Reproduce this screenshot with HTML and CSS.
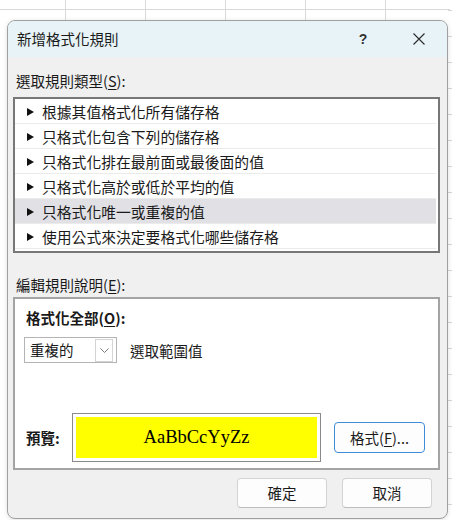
FILE: index.html
```
<!DOCTYPE html>
<html lang="zh-Hant">
<head>
<meta charset="utf-8">
<title>新增格式化規則</title>
<link rel="stylesheet" href="styles.css">
</head>
<body>
<div class="sheet"></div>
<div class="dialog">
  <div class="titlebar">
    <span class="title">新增格式化規則</span>
    <span class="help">?</span>
    <span class="close"><svg width="12" height="12" viewBox="0 0 12 12"><path d="M0.5 0.5 L11.5 11.5 M11.5 0.5 L0.5 11.5" stroke="#2b2b2b" stroke-width="1.1" fill="none"/></svg></span>
  </div>
  <div class="body">
    <div class="label">選取規則類型(<u>S</u>):</div>
    <ul class="rules">
      <li><span class="tri"></span>根據其值格式化所有儲存格</li>
      <li><span class="tri"></span>只格式化包含下列的儲存格</li>
      <li><span class="tri"></span>只格式化排在最前面或最後面的值</li>
      <li><span class="tri"></span>只格式化高於或低於平均的值</li>
      <li class="selected"><span class="tri"></span>只格式化唯一或重複的值</li>
      <li><span class="tri"></span>使用公式來決定要格式化哪些儲存格</li>
    </ul>
    <div class="label label-edit">編輯規則說明(<u>E</u>):</div>
    <div class="edit">
      <div class="strong">格式化全部(<u>O</u>):</div>
      <div class="select-row">
        <div class="select"><span class="select-text">重複的</span><span class="select-btn"><svg width="9" height="5" viewBox="0 0 9 5"><path d="M0.5 0.5 L4.5 4.5 L8.5 0.5" stroke="#7a7a7a" stroke-width="1" fill="none"/></svg></span></div>
        <span class="select-note">選取範圍值</span>
      </div>
      <div class="preview-row">
        <span class="strong preview-label">預覽:</span>
        <div class="preview"><div class="sample">AaBbCcYyZz</div></div>
        <button class="btn btn-format">格式(<u>F</u>)...</button>
      </div>
    </div>
    <div class="actions">
      <button class="btn">確定</button>
      <button class="btn">取消</button>
    </div>
  </div>
</div>
</body>
</html>
```
FILE: styles.css
```
* { box-sizing: border-box; }
html, body { margin: 0; padding: 0; }
body {
  width: 465px;
  height: 520px;
  overflow: hidden;
  background-color: #fff;
  background-image: repeating-linear-gradient(to bottom, #d6d6d6 0 1px, transparent 1px 26px);
  background-position: 448px 10px;
  background-size: 4px 26px;
  background-repeat: repeat-y;
  font-family: "Noto Sans CJK TC", "Noto Sans", sans-serif;
  font-size: 14.5px;
  color: #1a1a1a;
}
.sheet {
  height: 20px;
  width: 450px;
  background-image:
    linear-gradient(#d9d9d9, #d9d9d9),
    linear-gradient(to right, #d9d9d9 0 1px, transparent 1px 80px);
  background-position: 0 9px, 65px 0;
  background-size: 450px 1px, 80px 100%;
  background-repeat: no-repeat, repeat-x;
}
.dialog {
  margin-left: 7px;
  width: 441px;
  height: 499px;
  border: 1px solid #a0a0a0;
  border-radius: 8px;
  background: #f0f0f0;
  overflow: hidden;
  box-shadow: 0 1px 5px rgba(0,0,0,0.12);
  display: flex;
  flex-direction: column;
}
.titlebar {
  height: 36px;
  flex: none;
  background: #e7f3f7;
  display: flex;
  align-items: center;
  padding-left: 9px;
  padding-right: 8px;
}
.title { flex: 1; font-size: 14.5px; line-height: 20px; }
.help {
  width: 20px;
  text-align: center;
  font-size: 14px;
  font-weight: 700;
  color: #333;
  margin-right: 26px;
  font-family: "Liberation Sans", sans-serif;
}
.close {
  width: 40px;
  height: 20px;
  display: flex;
  align-items: center;
  justify-content: center;
}
.body {
  flex: 1;
  padding: 14px 7px 0 5px;
  display: flex;
  flex-direction: column;
}
.label {
  line-height: 20px;
  padding-left: 3px;
}
u { text-decoration: underline; text-underline-offset: 2px; }
.rules {
  list-style: none;
  margin: 6px 0 0;
  padding: 0 2px 2px 0;
  border: 2px solid #777;
  background: #fff;
  height: 156px;
}
.rules li {
  height: 25px;
  border-bottom: 1px solid #ebebeb;
  display: flex;
  align-items: center;
  padding-left: 12px;
  font-size: 14.8px;
  line-height: 20px;
  padding-top: 1px;
}
.rules li.selected { background: #e0e0e5; }
.tri {
  width: 0;
  height: 0;
  border-left: 7px solid #111;
  border-top: 4px solid transparent;
  border-bottom: 4px solid transparent;
  margin-right: 8px;
}
.label-edit { margin-top: 22px; }
.edit {
  margin-top: 2px;
  height: 173px;
  border: 2px solid #a4a4a4;
  background: #fff;
  padding: 9px 0 0 11px;
}
.strong { font-weight: 700; line-height: 20px; }
.select-row {
  margin-top: 9px;
  display: flex;
  align-items: center;
}
.select {
  margin-left: -2px;
  width: 93px;
  height: 26px;
  border: 1px solid #b4b4b4;
  background: #fff;
  display: flex;
  align-items: center;
  padding: 0 3px 0 5px;
}
.select-text { flex: 1; line-height: 20px; }
.select-btn {
  width: 18px;
  height: 23px;
  border: 1px solid #d4d4d4;
  display: flex;
  align-items: center;
  justify-content: center;
}
.select-note { margin-left: 13px; }
.preview-row {
  margin-top: 50px;
  display: flex;
  align-items: center;
}
.preview-label { width: 46px; }
.preview {
  width: 249px;
  height: 49px;
  border: 1px solid #8a8a8a;
  padding: 3px;
  background: #fff;
}
.sample {
  height: 100%;
  background: #ffff00;
  display: flex;
  align-items: center;
  justify-content: center;
  font-family: "Liberation Serif", serif;
  font-size: 18.5px;
  color: #000;
}
.btn {
  font-family: "Noto Sans CJK TC", "Noto Sans", sans-serif;
  font-size: 14.5px;
  color: #1a1a1a;
  background: #fdfdfd;
  border: 1px solid #d3d3d3;
  border-bottom-color: #bdbdbd;
  border-radius: 4px;
  width: 90px;
  height: 30px;
  padding: 0;
  line-height: 20px;
}
.btn-format {
  margin-left: 13px;
  width: 91px;
  height: 31px;
  border: 1px solid #3f8cd8;
}
.actions {
  margin-top: 8px;
  display: flex;
  justify-content: flex-end;
  gap: 15px;
  padding-right: 8px;
}
```
